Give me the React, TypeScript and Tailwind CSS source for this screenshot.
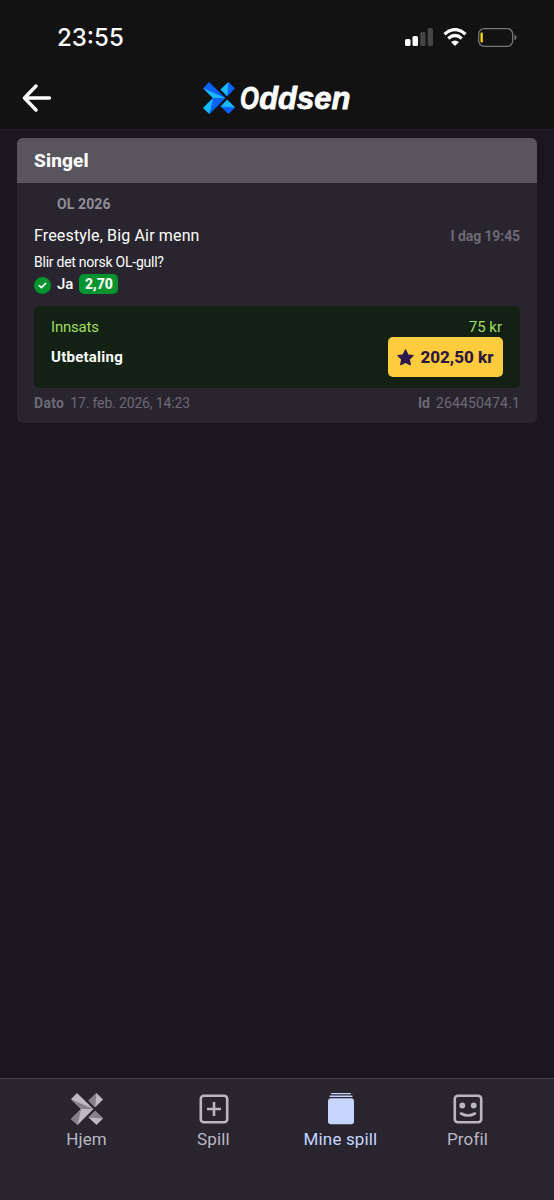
import React from 'react';

function CrossMark({ base, facet, className }: { base: string; facet: string; className?: string }) {
  return (
    <svg viewBox="0 0 32 32" className={className}>
      {/* left arrow */}
      <path d="M6 0 22.500 16 6.500 32 0 26 10 16 0 6.200Z" fill={base} />
      <path d="M0 6.200 22.500 16H10Z" fill={facet} />
      <path d="M10 16 6.500 32 0 26Z" fill={facet} />
      {/* right diamonds */}
      <path d="M25.500 0 32 6.500 24.200 14.200 17.500 7.500Z" fill={base} />
      <path d="M25.500 0 24.200 14.200 17.500 7.500Z" fill={facet} />
      <path d="M24.200 17.800 32 25.500 25.500 32 17.500 24.500Z" fill={base} />
      <path d="M24.200 17.800 32 25.500 17.500 24.500Z" fill={facet} />
    </svg>
  );
}

function StatusBar() {
  return (
    <div className="flex h-[74px] items-center justify-between pr-[37px] pl-[57px]">
      <span className="pt-[2px] font-[Inter] text-[24px] font-medium text-white">23:55</span>
      <div className="flex items-center">
        <svg width="28" height="18" viewBox="0 0 28 18">
          <rect x="0" y="11" width="5.500" height="7" rx="1.500" fill="#fff" />
          <rect x="7.500" y="8" width="5.500" height="10" rx="1.500" fill="#fff" />
          <rect x="15.200" y="4" width="5.300" height="14" rx="1.500" fill="#454545" />
          <rect x="22.700" y="0" width="5.300" height="18" rx="1.500" fill="#454545" />
        </svg>
        <svg width="24" height="18" viewBox="0 0 24 18" className="ml-[10px]">
          <path d="M12 18 8 14Q12 10.800 16 14Z" fill="#fff" />
          <path d="M1.500 6.200Q12-3 22.500 6.200M5.300 10.400Q12 4.700 18.700 10.400" fill="none" stroke="#fff" strokeWidth="3.300" />
        </svg>
        <svg width="39" height="19" viewBox="0 0 39 19" className="ml-[11px]">
          <rect x="0.700" y="0.700" width="34" height="17.600" rx="5.500" fill="none" stroke="#777" strokeWidth="1.300" />
          <path d="M36.500 6.500Q38.500 7.300 38.500 9.500T36.500 12.500Z" fill="#777" />
          <rect x="2.500" y="4.500" width="2.300" height="10" rx="1" fill="#fcd90b" />
        </svg>
      </div>
    </div>
  );
}

function BetCard() {
  return (
    <article className="overflow-hidden rounded-[6px] bg-[#28252f] font-[Roboto] text-white">
      <h2 className="flex h-[45px] items-center bg-[#59555f] px-[17px] pt-px text-[19px] font-extrabold tracking-[0.15px]">Singel</h2>
      <div className="h-[240px] px-[17px]">
        <div className="flex h-[41px] items-center pt-[2px] pl-[23px] text-[14px] font-bold tracking-[0.1px] text-[#918d99]">OL 2026</div>
        <div className="flex h-[24px] items-center justify-between">
          <span className="text-[16px] tracking-[0.15px]">Freestyle, Big Air menn</span>
          <span className="pt-px text-[14px] font-bold tracking-[-0.1px] text-[#6d6975]">I dag 19:45</span>
        </div>
        <div className="flex h-[26px] items-center pt-[2px] text-[14px] tracking-[-0.25px]">Blir det norsk OL-gull?</div>
        <div className="flex h-5 items-center">
          <svg width="17" height="17" viewBox="0 0 17 17" className="mt-[2px]">
            <circle cx="8.500" cy="8.500" r="8.500" fill="#04942f" />
            <path d="M5.300 8.700 7.500 10.700 11.500 6.500" fill="none" stroke="#fff" strokeWidth="1.800" strokeLinecap="round" strokeLinejoin="round" />
          </svg>
          <span className="ml-[6px] text-[15px] font-medium">Ja</span>
          <span className="ml-[6px] flex h-5 w-[39px] items-center justify-center rounded-[5px] bg-[#04942f] text-[14px] font-extrabold">2,70</span>
        </div>

        <div className="mt-3 h-[82px] rounded-[5px] bg-[#132115] px-[17px] pt-[11px]">
          <div className="flex h-5 items-center justify-between text-[15px] tracking-[-0.2px] text-[#a1dd61]">
            <span>Innsats</span>
            <span className="pr-px tracking-normal">75 kr</span>
          </div>
          <div className="flex h-10 items-center justify-between">
            <span className="text-[15px] font-bold tracking-[0.25px]">Utbetaling</span>
            <span className="flex h-10 w-[115px] items-center justify-center gap-[6px] rounded-[5px] bg-[#ffcc3d] text-[17px] font-extrabold text-[#2d173f]">
              <svg width="17" height="17" viewBox="0 0 24 24">
                <path d="m12 1.500 3.200 6.800 7.400 1-5.400 5.200 1.400 7.500-6.600-3.600L5.400 22l1.400-7.500L1.400 9.300l7.400-1Z" fill="#2d174f" stroke="#2d174f" strokeWidth="2" strokeLinejoin="round" />
              </svg>
              <span className="pt-px">202,50 kr</span>
            </span>
          </div>
        </div>

        <div className="flex h-[30px] items-center justify-between text-[14px] text-[#6d6975]">
          <span className="flex gap-[6px]"><b className="tracking-[0.3px]">Dato</b><span className="tracking-[-0.15px]">17. feb. 2026, 14:23</span></span>
          <span className="flex gap-[6px]"><b>Id</b><span className="tracking-[0.15px]">264450474.1</span></span>
        </div>
      </div>
    </article>
  );
}

function NavItem({ label, active, children }: { label: string; active?: boolean; children: React.ReactNode }) {
  return (
    <button className={`flex w-[127px] flex-col items-center ${active ? 'text-[#c8d5fe]' : 'text-[#bbb7c1]'}`}>
      <span className="flex h-8 items-center justify-center">{children}</span>
      <span className="mt-[2px] text-[17px] leading-6 tracking-[0.15px]">{label}</span>
    </button>
  );
}

export default function App() {
  return (
    <div className="flex h-[1200px] w-[554px] flex-col overflow-hidden bg-[#1a1720]">
      <header className="h-[130px] shrink-0 border-b border-[#25222b] bg-[#121212]">
        <StatusBar />
        <div className="flex h-12 items-center pl-[22px]">
          <svg width="30" height="28" viewBox="0 0 30 28" fill="none" stroke="#fff" strokeWidth="3.400" strokeLinecap="round" strokeLinejoin="round">
            <path d="M14 2 2.500 14 14 26M2.500 14H27.500" />
          </svg>
          <div className="ml-[151px] flex items-center">
            <CrossMark base="#0862fb" facet="#18baff" className="h-8 w-8" />
            <span className="ml-[5px] flex pt-px font-['Liberation_Sans'] text-[31px] leading-8 font-bold text-white italic [-webkit-text-stroke:0.8px_white]">
              <span className="-mr-[5px] origin-left scale-x-[0.78]">O</span>
              <span>ddsen</span>
            </span>
          </div>
        </div>
      </header>

      <main className="flex-1 px-[17px] pt-2">
        <BetCard />
      </main>

      <nav className="flex h-[122px] shrink-0 items-start border-t-[1.500px] border-[#413e48] bg-[#28252f] pt-[14px] pl-[23px] font-[Roboto]">
        <NavItem label="Hjem">
          <CrossMark base="#bcb9c1" facet="#85818b" className="h-8 w-8" />
        </NavItem>
        <NavItem label="Spill">
          <svg width="30" height="30" viewBox="0 0 30 30" fill="none" stroke="currentColor" strokeWidth="2.600">
            <rect x="1.800" y="1.800" width="26.400" height="26.400" rx="3" />
            <path d="M15 8V22M8 15H22" />
          </svg>
        </NavItem>
        <NavItem label="Mine spill" active>
          <svg width="26" height="32" viewBox="0 0 26 32" fill="currentColor">
            <rect x="3" y="0" width="20" height="1.300" rx=".5" />
            <rect x="1.500" y="2.500" width="23" height="1.500" rx=".5" />
            <rect x="0" y="5.200" width="26" height="26" rx="3" />
          </svg>
        </NavItem>
        <NavItem label="Profil">
          <svg width="30" height="30" viewBox="0 0 30 30" fill="none" stroke="currentColor" strokeWidth="2.600">
            <rect x="1.800" y="1.800" width="26.400" height="26.400" rx="3" />
            <circle cx="9.300" cy="11.500" r="2.900" fill="currentColor" stroke="none" />
            <circle cx="20.700" cy="11.500" r="2.900" fill="currentColor" stroke="none" />
            <path d="M8 19.500Q15 23.500 22 19.500" strokeLinecap="round" />
          </svg>
        </NavItem>
      </nav>
    </div>
  );
}
